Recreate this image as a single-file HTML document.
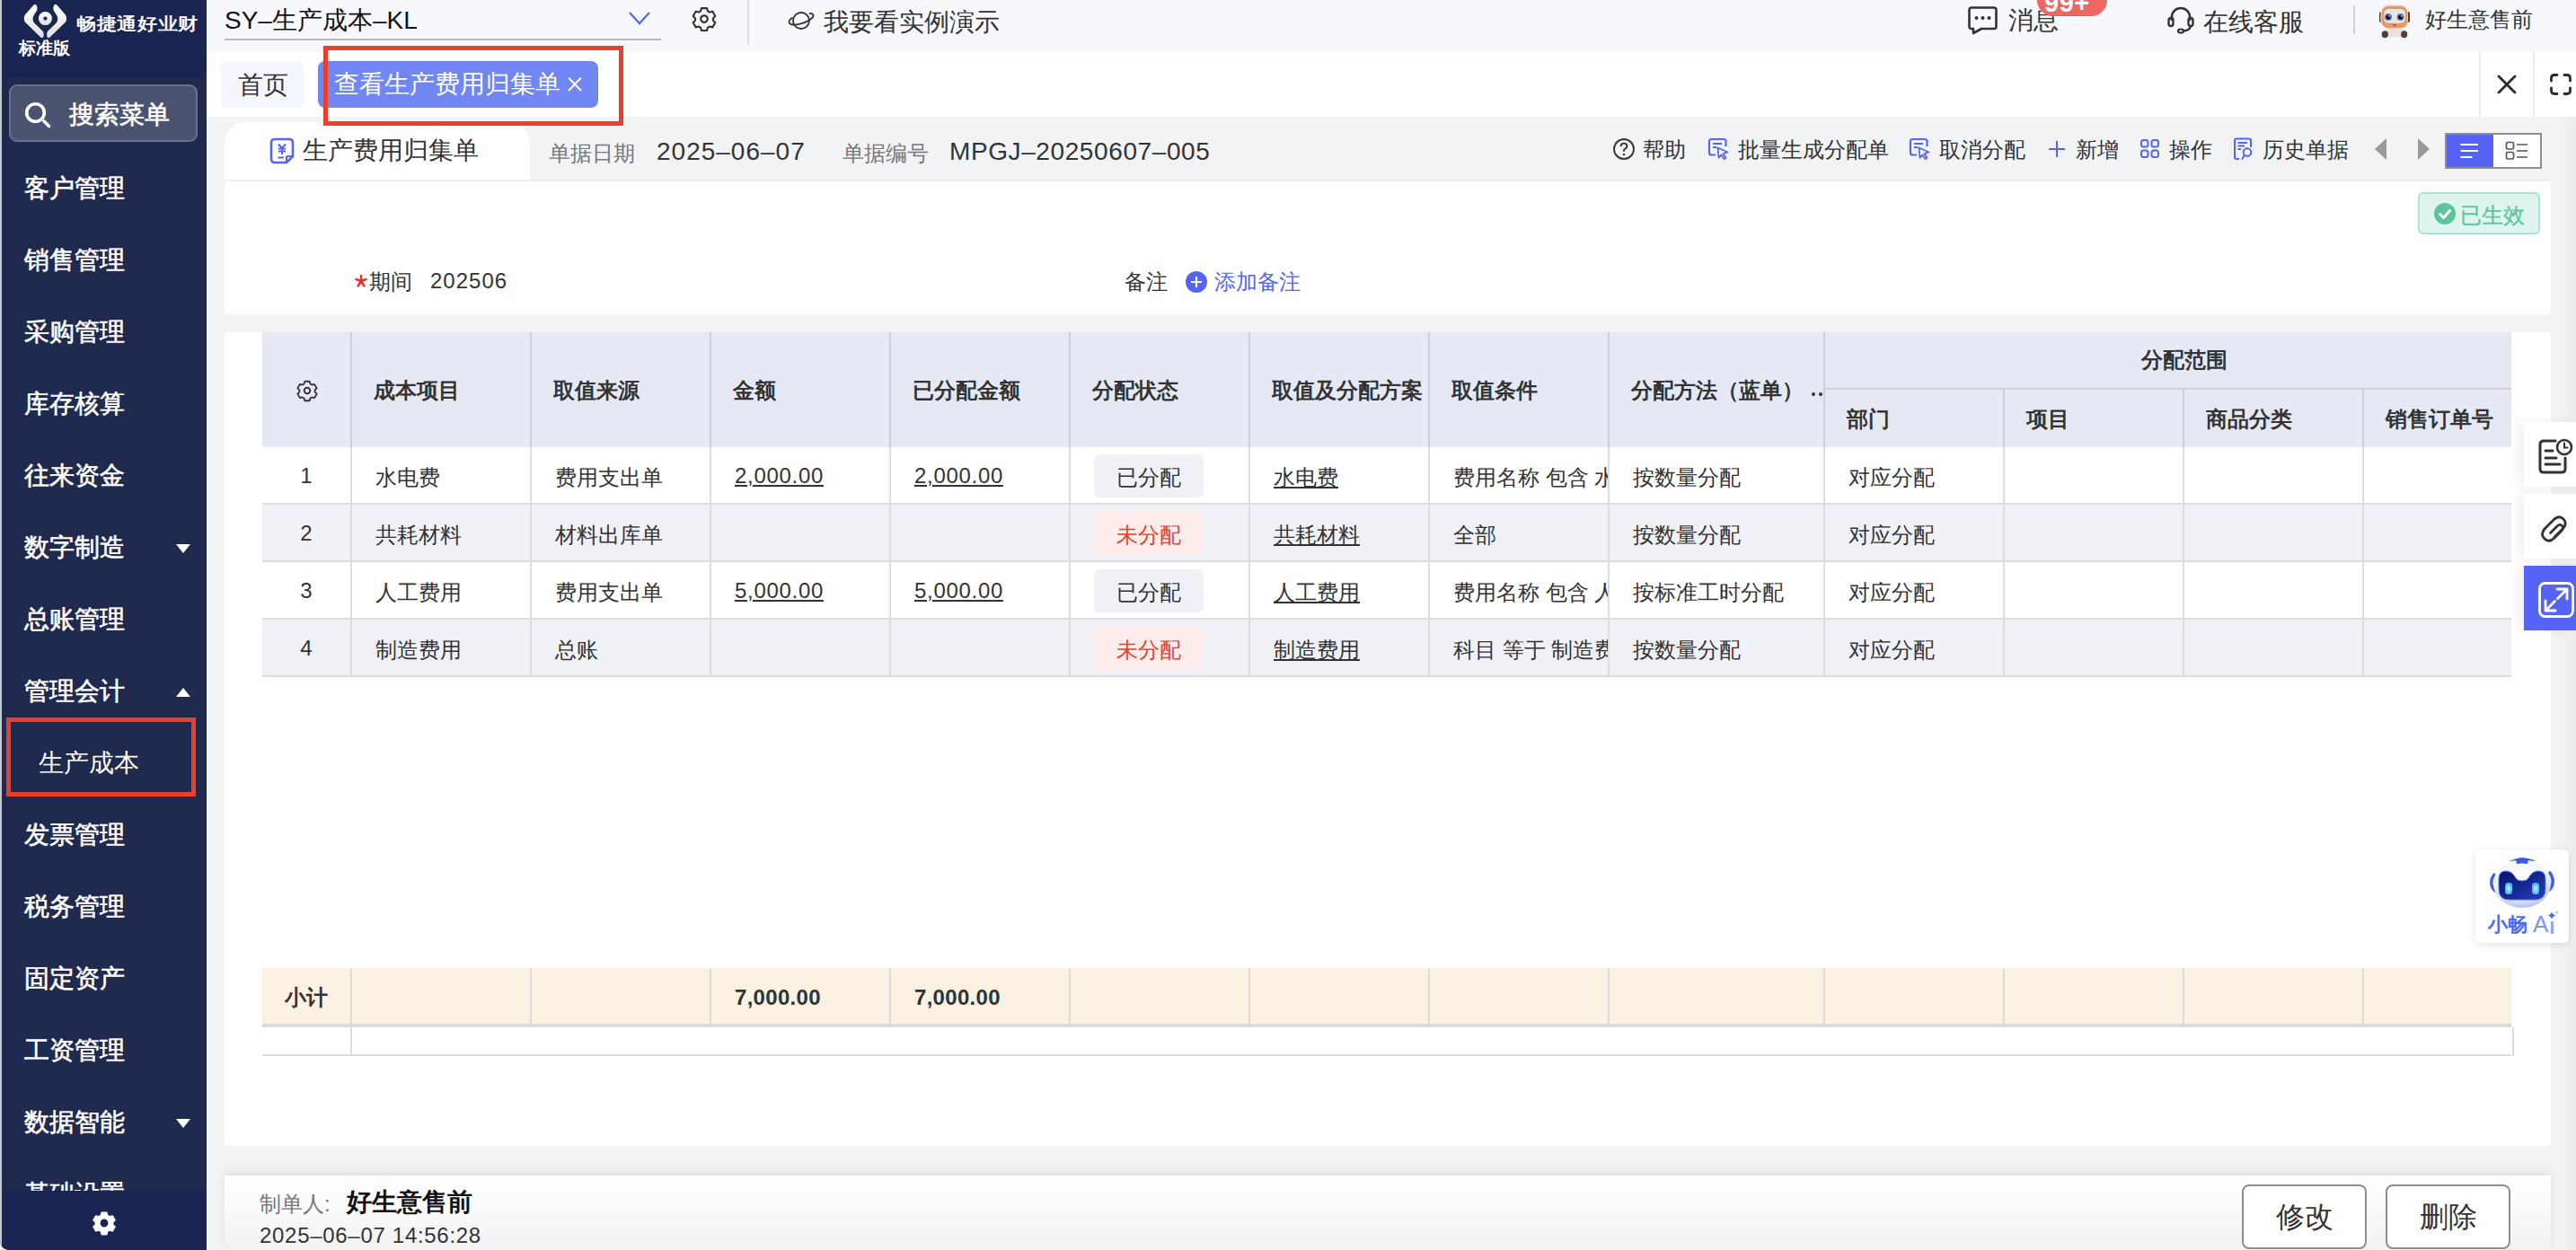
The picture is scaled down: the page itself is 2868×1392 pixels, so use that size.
<!DOCTYPE html>
<html><head><meta charset="utf-8">
<style>
*{box-sizing:border-box;margin:0;padding:0}
html,body{width:2868px;height:1392px;overflow:hidden}
body{position:relative;background:#f2f3f5;font-family:"Liberation Sans",sans-serif;color:#333}
.a{position:absolute;white-space:nowrap}
/* sidebar */
#sb{position:absolute;left:0;top:0;width:230px;height:1392px;background:#1f2a4e;overflow:hidden;border-bottom-left-radius:10px}
#sb .edge{position:absolute;left:0;top:0;width:2px;height:1392px;background:#c9c9cc}
#sb .logo{position:absolute;left:2px;top:0;width:228px;height:86px;background:#1a2552}
#sb .bot{position:absolute;left:2px;top:1326px;width:228px;height:66px;background:#1a2552}
#sb .mi{position:absolute;left:27px;font-size:28px;line-height:28px;color:#fff;-webkit-text-stroke:0.6px #fff;white-space:nowrap}
#sb .tri{position:absolute;left:196px;width:0;height:0;border-left:8px solid transparent;border-right:8px solid transparent}
/* top bar */
#top{position:absolute;left:230px;top:0;width:2638px;height:58px;background:#f7f8fc}
#tabs{position:absolute;left:230px;top:58px;width:2638px;height:72px;background:#fff}
.card{position:absolute;background:#fff}
.t28{font-size:28px;line-height:28px}
.t24{font-size:24px;line-height:24px}
.blue{color:#5664f5}
/* table */
#tbl{position:absolute;left:292px;top:370px}
.cell{position:absolute;border-right:2px solid #dcdcdc;border-bottom:2px solid #dcdcdc}
.hd{background:#e6e9f3}
.alt{background:#f0f1f7}
</style></head><body>

<!-- SIDEBAR -->
<div id="sb">
  <div class="logo"></div>
  <div class="mi" style="top:196px">客户管理</div>
  <div class="mi" style="top:276px">销售管理</div>
  <div class="mi" style="top:356px">采购管理</div>
  <div class="mi" style="top:436px">库存核算</div>
  <div class="mi" style="top:516px">往来资金</div>
  <div class="mi" style="top:596px">数字制造</div>
  <div class="mi" style="top:676px">总账管理</div>
  <div class="mi" style="top:756px">管理会计</div>
  <div class="mi" style="top:836px;left:43px;font-weight:400;-webkit-text-stroke:0">生产成本</div>
  <div class="mi" style="top:916px">发票管理</div>
  <div class="mi" style="top:996px">税务管理</div>
  <div class="mi" style="top:1076px">固定资产</div>
  <div class="mi" style="top:1156px">工资管理</div>
  <div class="mi" style="top:1236px">数据智能</div>
  <div class="mi" style="top:1316px">基础设置</div>
  <div class="tri" style="top:606px;border-top:10px solid #fff"></div>
  <div class="tri" style="top:766px;border-bottom:10px solid #fff"></div>
  <div class="tri" style="top:1246px;border-top:10px solid #fff"></div>
  <div class="a" style="left:7px;top:799px;width:211px;height:88px;border:5px solid #e8402a"></div>
  <div class="bot"></div>
  <svg class="a" style="left:0;top:0" width="230" height="86" viewBox="0 0 230 86">
    <defs><linearGradient id="lg1" x1="0" y1="0" x2="0" y2="1"><stop offset="0" stop-color="#ffffff"/><stop offset="1" stop-color="#dedede"/></linearGradient></defs>
    <path id="lcres" d="M37.5,5.5 L27.8,16.5 Q25.8,20.5 27.8,24.5 L45.2,41.5 Q47.8,43.6 48.6,40.2 L48.6,37.8 Q48.6,35.6 47.2,34.3 L37.8,25.2 Q35.3,21 37.8,16.8 L40.6,12.6 Q42.2,10 41.2,7.2 Q39.8,3.6 37.5,5.5 Z" fill="url(#lg1)"/>
    <use href="#lcres" transform="translate(100.8,0) scale(-1,1)"/>
    <circle cx="50.4" cy="20.6" r="7.5" fill="url(#lg1)"/>
    <circle cx="50.4" cy="20.6" r="2.1" fill="#1a2552"/>
  </svg>
  <div class="a" style="left:21px;top:44px;font-size:19px;line-height:19px;color:#fff;font-weight:700">标准版</div>
  <div class="a" style="left:85px;top:18px;font-size:22px;line-height:22px;color:#fff;-webkit-text-stroke:0.7px #fff;letter-spacing:0.7px;transform:scaleY(0.86);transform-origin:0 0">畅捷通好业财</div>
  <div class="a" style="left:10px;top:94px;width:210px;height:64px;border-radius:9px;background:#4a5470;border:2px solid #687190"></div>
  <svg class="a" style="left:24px;top:110px" width="36" height="36" viewBox="0 0 36 36">
    <circle cx="15.5" cy="15.5" r="9.8" fill="none" stroke="#fff" stroke-width="3.6"/>
    <line x1="25" y1="25" x2="30.5" y2="30.5" stroke="#fff" stroke-width="3.6" stroke-linecap="round"/>
  </svg>
  <div class="mi" style="left:77px;top:114px">搜索菜单</div>
  <svg class="a" style="left:102px;top:1348px" width="28" height="28" viewBox="0 0 24 24">
    <path fill="#fff" fill-rule="evenodd" d="M9.2 1.2h5.6l.9 3.1 1.5.9 3.1-.8 2.8 4.8-2.2 2.3v1.7l2.2 2.3-2.8 4.8-3.1-.8-1.5.9-.9 3.1H9.2l-.9-3.1-1.5-.9-3.1.8L.9 15.5l2.2-2.3v-1.7L.9 9.2l2.8-4.8 3.1.8 1.5-.9zM12 8.2a3.8 3.8 0 1 0 0 7.6 3.8 3.8 0 0 0 0-7.6z"/>
  </svg>
  <div class="edge"></div>
</div>

<!-- TOP BAR -->
<div id="top"></div>
<div id="tabs"></div>

<!-- top bar content -->
<div class="a t28" style="left:250px;top:9px;color:#111">SY–生产成本–KL</div>
<div class="a" style="left:250px;top:43px;width:486px;height:2px;background:#b9b9bd"></div>
<svg class="a" style="left:698px;top:10px" width="28" height="20" viewBox="0 0 28 20"><polyline points="3,4 14,16 25,4" fill="none" stroke="#5664f5" stroke-width="2.2"/></svg>
<svg class="a" style="left:768px;top:6px" width="32" height="30" viewBox="0 0 24 24"><path fill="none" stroke="#333" stroke-width="1.7" stroke-linejoin="round" d="M9.6 2.5h4.8l.8 2.6 1.6.95 2.65-.65 2.4 4.15-1.9 1.95v1.9l1.9 1.95-2.4 4.15-2.65-.65-1.6.95-.8 2.6H9.6l-.8-2.6-1.6-.95-2.65.65-2.4-4.15 1.9-1.95v-1.9l-1.9-1.95 2.4-4.15 2.65.65 1.6-.95z"/><circle cx="12" cy="12" r="3" fill="none" stroke="#333" stroke-width="1.8"/></svg>
<div class="a" style="left:832px;top:0;width:2px;height:50px;background:#dedfe3"></div>
<svg class="a" style="left:876px;top:10px" width="32" height="26" viewBox="0 0 32 26"><circle cx="16" cy="13" r="9" fill="none" stroke="#333" stroke-width="1.8"/><path d="M6.5,9.5 C1,13 1.5,17 7,17.5 C13,18 22,15 27,11 C31,8 30,4.5 25,5" fill="none" stroke="#333" stroke-width="1.8"/></svg>
<div class="a t28" style="left:917px;top:11px;color:#333">我要看实例演示</div>

<svg class="a" style="left:2190px;top:5px" width="36" height="34" viewBox="0 0 36 34"><path d="M5,3.5 H30 Q32.5,3.5 32.5,6 V24.5 Q32.5,27 30,27 H16 L7,32 V27 H5 Q2.5,27 2.5,24.5 V6 Q2.5,3.5 5,3.5 Z" fill="none" stroke="#333" stroke-width="2.6" stroke-linejoin="round"/><circle cx="10.5" cy="15" r="2" fill="#333"/><circle cx="17.5" cy="15" r="2" fill="#333"/><circle cx="24.5" cy="15" r="2" fill="#333"/></svg>
<div class="a t28" style="left:2236px;top:9px;color:#333">消息</div>
<div class="a" style="left:2268px;top:-18px;width:78px;height:36px;border-radius:18px;background:#ec6762"></div>
<div class="a" style="left:2276px;top:-11px;font-size:29px;line-height:29px;color:#fff;font-weight:700;letter-spacing:0.5px">99+</div>
<svg class="a" style="left:2412px;top:6px" width="32" height="32" viewBox="0 0 32 32"><path d="M6,17 V13 A10,10 0 0 1 26,13 V17" fill="none" stroke="#333" stroke-width="2.6"/><rect x="2.5" y="14" width="5" height="9" rx="2.5" fill="none" stroke="#333" stroke-width="2.4"/><rect x="24.5" y="14" width="5" height="9" rx="2.5" fill="none" stroke="#333" stroke-width="2.4"/><path d="M27,23 Q26,28 19,28.5" fill="none" stroke="#333" stroke-width="2.4"/><ellipse cx="16" cy="28.5" rx="3" ry="2" fill="none" stroke="#333" stroke-width="2.2"/></svg>
<div class="a t28" style="left:2453px;top:11px;color:#333">在线客服</div>
<div class="a" style="left:2620px;top:6px;width:2px;height:32px;background:#d3d3d6"></div>
<svg class="a" style="left:2646px;top:3px" width="40" height="40" viewBox="0 0 40 40">
  <rect x="3" y="10" width="3.5" height="12" rx="1.7" fill="#5a3b2c"/>
  <rect x="33.5" y="10" width="3.5" height="12" rx="1.7" fill="#5a3b2c"/>
  <rect x="4.5" y="1.5" width="30.5" height="27.5" rx="9" fill="#f3ede9"/>
  <rect x="5.5" y="3.5" width="29" height="25" rx="8" fill="#e49b6b"/>
  <rect x="8.3" y="7" width="23.5" height="15.8" rx="5" fill="#e9e3e2"/>
  <circle cx="13" cy="16.1" r="4" fill="#4f8ad6"/><circle cx="13" cy="16.1" r="2.7" fill="#1b1212"/><circle cx="14.2" cy="14.9" r="0.8" fill="#fff"/>
  <circle cx="26.6" cy="16.1" r="4" fill="#4f8ad6"/><circle cx="26.6" cy="16.1" r="2.7" fill="#1b1212"/><circle cx="27.8" cy="14.9" r="0.8" fill="#fff"/>
  <path d="M17.5,24.5 H22.5 L20,26.2 Z" fill="#6e4030"/>
  <rect x="11" y="28.5" width="18" height="10" rx="2" fill="#e7e2e0"/>
  <ellipse cx="9.3" cy="35.2" rx="3.6" ry="4" fill="#5a3b2c"/>
  <ellipse cx="30.7" cy="35.2" rx="3.6" ry="4" fill="#5a3b2c"/>
</svg>
<div class="a t24" style="left:2700px;top:10px;color:#333">好生意售前</div>

<!-- tabs row -->
<div class="a" style="left:246px;top:68px;width:92px;height:52px;border-radius:8px;background:#f4f6fd"></div>
<div class="a t28" style="left:265px;top:81px;color:#333">首页</div>
<div class="a" style="left:354px;top:68px;width:312px;height:52px;border-radius:8px;background:#7086f3"></div>
<div class="a t28" style="left:372px;top:80px;color:#fff">查看生产费用归集单</div>
<svg class="a" style="left:630px;top:85px" width="20" height="18" viewBox="0 0 20 18"><path d="M3,1.5 L17,16 M17,1.5 L3,16" stroke="#fff" stroke-width="2"/></svg>
<div class="a" style="left:360px;top:51px;width:334px;height:89px;border:5px solid #e8402a;z-index:100"></div>
<div class="a" style="left:2760px;top:58px;width:2px;height:72px;background:#ebebed"></div>
<div class="a" style="left:2820px;top:58px;width:2px;height:72px;background:#ebebed"></div>
<svg class="a" style="left:2779px;top:82px" width="24" height="24" viewBox="0 0 24 24"><path d="M3,3 L21,21 M21,3 L3,21" stroke="#2b2b2b" stroke-width="2.8" stroke-linecap="round"/></svg>
<svg class="a" style="left:2837px;top:80px" width="28" height="28" viewBox="0 0 28 28"><path d="M3.5,10 V7 Q3.5,3.5 7,3.5 H10 M18,3.5 H21 Q24.5,3.5 24.5,7 V10 M24.5,18 V21 Q24.5,24.5 21,24.5 H18 M10,24.5 H7 Q3.5,24.5 3.5,21 V18" fill="none" stroke="#2b2b2b" stroke-width="2.8" stroke-linecap="round"/></svg>

<!-- doc header title tab -->
<div class="card" style="left:250px;top:136px;width:340px;height:64px;border-radius:24px 24px 0 0"></div>
<div class="a" style="left:250px;top:200px;width:2590px;height:2px;background:#eceef2"></div>
<!-- form card -->
<div class="card" style="left:250px;top:202px;width:2590px;height:148px"></div>
<!-- doc header content -->
<svg class="a" style="left:299px;top:152px" width="30" height="32" viewBox="0 0 30 32">
  <path d="M7,3 H23 Q27,3 27,7 V22 L20,29 H7 Q3,29 3,25 V7 Q3,3 7,3 Z" fill="none" stroke="#5664f5" stroke-width="2.6" stroke-linejoin="round"/>
  <path d="M27,22 L21.5,22 Q20,22 20,23.5 V29" fill="none" stroke="#5664f5" stroke-width="2.2"/>
  <path d="M11,8.5 L15,13 L19,8.5 M15,13 V20 M11,13.5 H19 M11,16.5 H19 M10.5,23.5 H17" fill="none" stroke="#5664f5" stroke-width="2"/>
</svg>
<div class="a t28" style="left:337px;top:154px;color:#333">生产费用归集单</div>
<div class="a t24" style="left:611px;top:159px;color:#777">单据日期</div>
<div class="a t28" style="left:731px;top:155px;color:#333;letter-spacing:1px">2025–06–07</div>
<div class="a t24" style="left:938px;top:159px;color:#777">单据编号</div>
<div class="a t28" style="left:1057px;top:155px;color:#333;letter-spacing:0.6px">MPGJ–20250607–005</div>

<!-- toolbar -->
<svg class="a" style="left:1795px;top:153px" width="26" height="26" viewBox="0 0 26 26"><circle cx="13" cy="13" r="11" fill="none" stroke="#333" stroke-width="1.9"/><path d="M9.6,10 Q9.6,6.6 13,6.6 Q16.4,6.6 16.4,9.8 Q16.4,12 13.6,13.2 Q13,13.5 13,15 V15.8" fill="none" stroke="#333" stroke-width="1.9"/><circle cx="13" cy="19" r="1.2" fill="#333"/></svg>
<div class="a t24" style="left:1829px;top:155px;color:#333">帮助</div>
<svg class="a" style="left:1901px;top:153px" width="26" height="26" viewBox="0 0 26 26"><path d="M9,19.5 H4.5 Q2,19.5 2,17 V4.5 Q2,2 4.5,2 H18 Q20.5,2 20.5,4.5 V10" fill="none" stroke="#5664f5" stroke-width="2.2"/><path d="M6,7 H16 M6,11 H10" stroke="#5664f5" stroke-width="2"/><path d="M11.5,11.5 L22.5,16.5 L17.5,18 L20.5,23 L18.5,24 L15.5,19.5 L12.5,22.5 Z" fill="none" stroke="#5664f5" stroke-width="1.8" stroke-linejoin="round"/></svg>
<div class="a t24" style="left:1935px;top:155px;color:#333">批量生成分配单</div>
<svg class="a" style="left:2125px;top:153px" width="26" height="26" viewBox="0 0 26 26"><path d="M9,19.5 H4.5 Q2,19.5 2,17 V4.5 Q2,2 4.5,2 H18 Q20.5,2 20.5,4.5 V10" fill="none" stroke="#5664f5" stroke-width="2.2"/><path d="M6,7 H16 M6,11 H10" stroke="#5664f5" stroke-width="2"/><path d="M11.5,11.5 L22.5,16.5 L17.5,18 L20.5,23 L18.5,24 L15.5,19.5 L12.5,22.5 Z" fill="none" stroke="#5664f5" stroke-width="1.8" stroke-linejoin="round"/></svg>
<div class="a t24" style="left:2159px;top:155px;color:#333">取消分配</div>
<svg class="a" style="left:2280px;top:156px" width="20" height="20" viewBox="0 0 20 20"><path d="M10,1 V19 M1,10 H19" stroke="#5664f5" stroke-width="2"/></svg>
<div class="a t24" style="left:2311px;top:155px;color:#333">新增</div>
<svg class="a" style="left:2382px;top:154px" width="24" height="24" viewBox="0 0 24 24"><rect x="2" y="2" width="7.5" height="7.5" rx="2.5" fill="none" stroke="#5664f5" stroke-width="2"/><rect x="13.5" y="2" width="7.5" height="7.5" rx="2.5" fill="none" stroke="#5664f5" stroke-width="2"/><rect x="2" y="13.5" width="7.5" height="7.5" rx="2.5" fill="none" stroke="#5664f5" stroke-width="2"/><rect x="13.5" y="13.5" width="7.5" height="7.5" rx="2.5" fill="none" stroke="#5664f5" stroke-width="2"/></svg>
<div class="a t24" style="left:2415px;top:155px;color:#333">操作</div>
<svg class="a" style="left:2486px;top:153px" width="24" height="26" viewBox="0 0 24 26"><path d="M7,24 H4 Q2,24 2,22 V3.5 Q2,1.5 4,1.5 H18 Q20,1.5 20,3.5 V11" fill="none" stroke="#5664f5" stroke-width="2"/><path d="M5.5,6 H16 M5.5,9.5 H13 M5.5,13 H9" stroke="#5664f5" stroke-width="2"/><circle cx="16" cy="16.5" r="4.3" fill="none" stroke="#5664f5" stroke-width="2"/><path d="M13,19.5 L10,24.5" stroke="#5664f5" stroke-width="2"/></svg>
<div class="a t24" style="left:2519px;top:155px;color:#333">历史单据</div>
<svg class="a" style="left:2643px;top:153px" width="16" height="26" viewBox="0 0 16 26"><path d="M14,1 V25 L1,13 Z" fill="#999"/></svg>
<svg class="a" style="left:2691px;top:153px" width="16" height="26" viewBox="0 0 16 26"><path d="M1,1 V25 L14,13 Z" fill="#999"/></svg>
<div class="a" style="left:2722px;top:148px;width:108px;height:40px;border:2px solid #8e8e8e;background:#fff"></div>
<div class="a" style="left:2724px;top:150px;width:52px;height:36px;background:#5664f5"></div>
<svg class="a" style="left:2738px;top:158px" width="24" height="20" viewBox="0 0 24 20"><path d="M1.5,3 H21 M1.5,10 H21 M1.5,17 H14.5" stroke="#fff" stroke-width="1.8"/></svg>
<svg class="a" style="left:2788px;top:156px" width="28" height="24" viewBox="0 0 28 24"><rect x="2.5" y="2.5" width="8" height="7.5" rx="1.5" fill="none" stroke="#555" stroke-width="1.7"/><rect x="2.5" y="13.5" width="8" height="7.5" rx="1.5" fill="none" stroke="#555" stroke-width="1.7"/><path d="M14,5 H26 M14,12 H26 M14,19 H26" stroke="#555" stroke-width="1.7"/></svg>

<!-- status badge -->
<div class="a" style="left:2692px;top:214px;width:136px;height:47px;border-radius:6px;background:#def5ef;border:2px solid #a9e4cf"></div>
<svg class="a" style="left:2709px;top:225px" width="26" height="26" viewBox="0 0 26 26"><circle cx="13" cy="13" r="12" fill="#5cc59b"/><path d="M7.5,13.5 L11.5,17.5 L18.5,9.5" fill="none" stroke="#fff" stroke-width="3" stroke-linecap="round" stroke-linejoin="round"/></svg>
<div class="a t24" style="left:2739px;top:228px;color:#5cc59b;-webkit-text-stroke:0.3px #5cc59b">已生效</div>

<!-- form -->
<svg class="a" style="left:395px;top:306px" width="14" height="14" viewBox="0 0 14 14"><path d="M7,1 V7 M7,7 L1.5,5 M7,7 L12.5,5 M7,7 L3.5,12.5 M7,7 L10.5,12.5" stroke="#e8302a" stroke-width="2.4" stroke-linecap="round"/></svg>
<div class="a t24" style="left:411px;top:302px;color:#333">期间</div>
<div class="a t24" style="left:479px;top:301px;color:#333;letter-spacing:1px">202506</div>
<div class="a t24" style="left:1252px;top:302px;color:#333">备注</div>
<svg class="a" style="left:1320px;top:302px" width="24" height="24" viewBox="0 0 24 24"><circle cx="12" cy="12" r="12" fill="#5664f5"/><path d="M12,6 V18 M6,12 H18" stroke="#fff" stroke-width="2.2"/></svg>
<div class="a t24 blue" style="left:1352px;top:302px">添加备注</div>

<!-- table card -->
<div class="card" style="left:250px;top:370px;width:2590px;height:906px"></div>
<!-- TABLE -->
<div class="a" style="left:292px;top:370px;width:2504px;height:906px;overflow:hidden">
<div class="a" style="left:0px;top:0px;width:2504px;height:128px;background:#e6e9f3"></div>
<div class="a" style="left:0px;top:128px;width:2504px;height:62px;background:#ffffff"></div>
<div class="a" style="left:0px;top:190px;width:2504px;height:2px;background:#dcdcdc"></div>
<div class="a" style="left:0px;top:192px;width:2504px;height:62px;background:#f0f1f7"></div>
<div class="a" style="left:0px;top:254px;width:2504px;height:2px;background:#dcdcdc"></div>
<div class="a" style="left:0px;top:256px;width:2504px;height:62px;background:#ffffff"></div>
<div class="a" style="left:0px;top:318px;width:2504px;height:2px;background:#dcdcdc"></div>
<div class="a" style="left:0px;top:320px;width:2504px;height:62px;background:#f0f1f7"></div>
<div class="a" style="left:0px;top:382px;width:2504px;height:2px;background:#dcdcdc"></div>
<div class="a" style="left:98px;top:0px;width:2px;height:128px;background:#cfd0d4"></div>
<div class="a" style="left:98px;top:128px;width:2px;height:256px;background:#dcdcdc"></div>
<div class="a" style="left:298px;top:0px;width:2px;height:128px;background:#cfd0d4"></div>
<div class="a" style="left:298px;top:128px;width:2px;height:256px;background:#dcdcdc"></div>
<div class="a" style="left:498px;top:0px;width:2px;height:128px;background:#cfd0d4"></div>
<div class="a" style="left:498px;top:128px;width:2px;height:256px;background:#dcdcdc"></div>
<div class="a" style="left:698px;top:0px;width:2px;height:128px;background:#cfd0d4"></div>
<div class="a" style="left:698px;top:128px;width:2px;height:256px;background:#dcdcdc"></div>
<div class="a" style="left:898px;top:0px;width:2px;height:128px;background:#cfd0d4"></div>
<div class="a" style="left:898px;top:128px;width:2px;height:256px;background:#dcdcdc"></div>
<div class="a" style="left:1098px;top:0px;width:2px;height:128px;background:#cfd0d4"></div>
<div class="a" style="left:1098px;top:128px;width:2px;height:256px;background:#dcdcdc"></div>
<div class="a" style="left:1298px;top:0px;width:2px;height:128px;background:#cfd0d4"></div>
<div class="a" style="left:1298px;top:128px;width:2px;height:256px;background:#dcdcdc"></div>
<div class="a" style="left:1498px;top:0px;width:2px;height:128px;background:#cfd0d4"></div>
<div class="a" style="left:1498px;top:128px;width:2px;height:256px;background:#dcdcdc"></div>
<div class="a" style="left:1738px;top:0px;width:2px;height:128px;background:#cfd0d4"></div>
<div class="a" style="left:1738px;top:128px;width:2px;height:256px;background:#dcdcdc"></div>
<div class="a" style="left:1938px;top:62px;width:2px;height:66px;background:#cfd0d4"></div>
<div class="a" style="left:1938px;top:128px;width:2px;height:256px;background:#dcdcdc"></div>
<div class="a" style="left:2138px;top:62px;width:2px;height:66px;background:#cfd0d4"></div>
<div class="a" style="left:2138px;top:128px;width:2px;height:256px;background:#dcdcdc"></div>
<div class="a" style="left:2338px;top:62px;width:2px;height:66px;background:#cfd0d4"></div>
<div class="a" style="left:2338px;top:128px;width:2px;height:256px;background:#dcdcdc"></div>
<div class="a" style="left:1740px;top:62px;width:800px;height:2px;background:#cfd0d4"></div>
<div class="a" style="left:124px;top:53px;font-size:24px;line-height:24px;font-weight:700;color:#333">成本项目</div>
<div class="a" style="left:324px;top:53px;font-size:24px;line-height:24px;font-weight:700;color:#333">取值来源</div>
<div class="a" style="left:524px;top:53px;font-size:24px;line-height:24px;font-weight:700;color:#333">金额</div>
<div class="a" style="left:724px;top:53px;font-size:24px;line-height:24px;font-weight:700;color:#333">已分配金额</div>
<div class="a" style="left:924px;top:53px;font-size:24px;line-height:24px;font-weight:700;color:#333">分配状态</div>
<div class="a" style="left:1124px;top:53px;font-size:24px;line-height:24px;font-weight:700;color:#333">取值及分配方案</div>
<div class="a" style="left:1324px;top:53px;font-size:24px;line-height:24px;font-weight:700;color:#333">取值条件</div>
<div class="a" style="left:1524px;top:53px;font-size:24px;line-height:24px;font-weight:700;color:#333">分配方法（蓝单）</div>
<div class="a" style="left:1725px;top:67px;width:4px;height:4px;border-radius:2px;background:#333"></div>
<div class="a" style="left:1733px;top:67px;width:4px;height:4px;border-radius:2px;background:#333"></div>
<div class="a" style="left:1764px;top:85px;font-size:24px;line-height:24px;font-weight:700;color:#333">部门</div>
<div class="a" style="left:1964px;top:85px;font-size:24px;line-height:24px;font-weight:700;color:#333">项目</div>
<div class="a" style="left:2164px;top:85px;font-size:24px;line-height:24px;font-weight:700;color:#333">商品分类</div>
<div class="a" style="left:2364px;top:85px;font-size:24px;line-height:24px;font-weight:700;color:#333">销售订单号</div>
<div class="a" style="left:2092px;top:19px;font-size:24px;line-height:24px;font-weight:700;color:#333">分配范围</div>
<svg class="a" style="left:37px;top:52px;" width="26" height="26" viewBox="0 0 24 24"><path fill="none" stroke="#333" stroke-width="1.7" stroke-linejoin="round" d="M9.6 2.5h4.8l.8 2.6 1.6.95 2.65-.65 2.4 4.15-1.9 1.95v1.9l1.9 1.95-2.4 4.15-2.65-.65-1.6.95-.8 2.6H9.6l-.8-2.6-1.6-.95-2.65.65-2.4-4.15 1.9-1.95v-1.9l-1.9-1.95 2.4-4.15 2.65.65 1.6-.95z"/><circle cx="12" cy="12" r="3" fill="none" stroke="#333" stroke-width="1.8"/></svg>
<div class="a" style="left:0px;top:148px;width:98px;text-align:center;font-size:24px;line-height:24px;color:#333">1</div>
<div class="a" style="left:126px;top:150px;font-size:24px;line-height:24px;color:#333">水电费</div>
<div class="a" style="left:326px;top:150px;font-size:24px;line-height:24px;color:#333">费用支出单</div>
<div class="a" style="left:526px;top:148px;font-size:24px;line-height:24px;color:#333;text-decoration:underline;letter-spacing:0.7px">2,000.00</div>
<div class="a" style="left:726px;top:148px;font-size:24px;line-height:24px;color:#333;text-decoration:underline;letter-spacing:0.7px">2,000.00</div>
<div class="a" style="left:926px;top:136px;width:122px;height:48px;border-radius:7px;background:#f0f1f7"></div>
<div class="a" style="left:926px;top:150px;width:122px;text-align:center;font-size:24px;line-height:24px;color:#333">已分配</div>
<div class="a" style="left:1126px;top:150px;font-size:24px;line-height:24px;color:#333;text-decoration:underline">水电费</div>
<div class="a" style="left:1326px;top:150px;font-size:24px;line-height:24px;color:#333;width:172px;overflow:hidden">费用名称 包含 水电费</div>
<div class="a" style="left:1526px;top:150px;font-size:24px;line-height:24px;color:#333">按数量分配</div>
<div class="a" style="left:1766px;top:150px;font-size:24px;line-height:24px;color:#333">对应分配</div>
<div class="a" style="left:0px;top:212px;width:98px;text-align:center;font-size:24px;line-height:24px;color:#333">2</div>
<div class="a" style="left:126px;top:214px;font-size:24px;line-height:24px;color:#333">共耗材料</div>
<div class="a" style="left:326px;top:214px;font-size:24px;line-height:24px;color:#333">材料出库单</div>
<div class="a" style="left:926px;top:200px;width:122px;height:48px;border-radius:7px;background:#fcedec"></div>
<div class="a" style="left:926px;top:214px;width:122px;text-align:center;font-size:24px;line-height:24px;color:#333;color:#e8402a">未分配</div>
<div class="a" style="left:1126px;top:214px;font-size:24px;line-height:24px;color:#333;text-decoration:underline">共耗材料</div>
<div class="a" style="left:1326px;top:214px;font-size:24px;line-height:24px;color:#333;width:172px;overflow:hidden">全部</div>
<div class="a" style="left:1526px;top:214px;font-size:24px;line-height:24px;color:#333">按数量分配</div>
<div class="a" style="left:1766px;top:214px;font-size:24px;line-height:24px;color:#333">对应分配</div>
<div class="a" style="left:0px;top:276px;width:98px;text-align:center;font-size:24px;line-height:24px;color:#333">3</div>
<div class="a" style="left:126px;top:278px;font-size:24px;line-height:24px;color:#333">人工费用</div>
<div class="a" style="left:326px;top:278px;font-size:24px;line-height:24px;color:#333">费用支出单</div>
<div class="a" style="left:526px;top:276px;font-size:24px;line-height:24px;color:#333;text-decoration:underline;letter-spacing:0.7px">5,000.00</div>
<div class="a" style="left:726px;top:276px;font-size:24px;line-height:24px;color:#333;text-decoration:underline;letter-spacing:0.7px">5,000.00</div>
<div class="a" style="left:926px;top:264px;width:122px;height:48px;border-radius:7px;background:#f0f1f7"></div>
<div class="a" style="left:926px;top:278px;width:122px;text-align:center;font-size:24px;line-height:24px;color:#333">已分配</div>
<div class="a" style="left:1126px;top:278px;font-size:24px;line-height:24px;color:#333;text-decoration:underline">人工费用</div>
<div class="a" style="left:1326px;top:278px;font-size:24px;line-height:24px;color:#333;width:172px;overflow:hidden">费用名称 包含 人工费用</div>
<div class="a" style="left:1526px;top:278px;font-size:24px;line-height:24px;color:#333">按标准工时分配</div>
<div class="a" style="left:1766px;top:278px;font-size:24px;line-height:24px;color:#333">对应分配</div>
<div class="a" style="left:0px;top:340px;width:98px;text-align:center;font-size:24px;line-height:24px;color:#333">4</div>
<div class="a" style="left:126px;top:342px;font-size:24px;line-height:24px;color:#333">制造费用</div>
<div class="a" style="left:326px;top:342px;font-size:24px;line-height:24px;color:#333">总账</div>
<div class="a" style="left:926px;top:328px;width:122px;height:48px;border-radius:7px;background:#fcedec"></div>
<div class="a" style="left:926px;top:342px;width:122px;text-align:center;font-size:24px;line-height:24px;color:#333;color:#e8402a">未分配</div>
<div class="a" style="left:1126px;top:342px;font-size:24px;line-height:24px;color:#333;text-decoration:underline">制造费用</div>
<div class="a" style="left:1326px;top:342px;font-size:24px;line-height:24px;color:#333;width:172px;overflow:hidden">科目 等于 制造费用</div>
<div class="a" style="left:1526px;top:342px;font-size:24px;line-height:24px;color:#333">按数量分配</div>
<div class="a" style="left:1766px;top:342px;font-size:24px;line-height:24px;color:#333">对应分配</div>
<div class="a" style="left:0px;top:708px;width:2504px;height:62px;background:#faf1e1"></div>
<div class="a" style="left:0px;top:770px;width:2504px;height:4px;background:#dcdcdc"></div>
<div class="a" style="left:98px;top:708px;width:2px;height:62px;background:#dcdcdc"></div>
<div class="a" style="left:298px;top:708px;width:2px;height:62px;background:#dcdcdc"></div>
<div class="a" style="left:498px;top:708px;width:2px;height:62px;background:#dcdcdc"></div>
<div class="a" style="left:698px;top:708px;width:2px;height:62px;background:#dcdcdc"></div>
<div class="a" style="left:898px;top:708px;width:2px;height:62px;background:#dcdcdc"></div>
<div class="a" style="left:1098px;top:708px;width:2px;height:62px;background:#dcdcdc"></div>
<div class="a" style="left:1298px;top:708px;width:2px;height:62px;background:#dcdcdc"></div>
<div class="a" style="left:1498px;top:708px;width:2px;height:62px;background:#dcdcdc"></div>
<div class="a" style="left:1738px;top:708px;width:2px;height:62px;background:#dcdcdc"></div>
<div class="a" style="left:1938px;top:708px;width:2px;height:62px;background:#dcdcdc"></div>
<div class="a" style="left:2138px;top:708px;width:2px;height:62px;background:#dcdcdc"></div>
<div class="a" style="left:2338px;top:708px;width:2px;height:62px;background:#dcdcdc"></div>
<div class="a" style="left:0px;top:729px;width:98px;text-align:center;font-size:24px;line-height:24px;font-weight:700;color:#333">小计</div>
<div class="a" style="left:526px;top:729px;font-size:24px;line-height:24px;font-weight:700;color:#333;letter-spacing:0.3px">7,000.00</div>
<div class="a" style="left:726px;top:729px;font-size:24px;line-height:24px;font-weight:700;color:#333;letter-spacing:0.3px">7,000.00</div>
<div class="a" style="left:0px;top:804px;width:2507px;height:2px;background:#dcdcdc"></div>
<div class="a" style="left:98px;top:774px;width:2px;height:30px;background:#dcdcdc"></div>
</div>
<div class="a" style="left:2797px;top:1144px;width:2px;height:32px;background:#dcdcdc"></div>
<!-- footer -->
<div class="card" style="left:250px;top:1309px;width:2590px;height:83px;background:linear-gradient(#ffffff 0%,#fbfbfc 40%,#f1f1f3 100%);box-shadow:0 -4px 10px rgba(0,0,0,0.08)"></div>

<!-- footer content -->
<div class="a t24" style="left:289px;top:1329px;color:#777">制单人:</div>
<div class="a t28" style="left:386px;top:1325px;color:#111;font-weight:700">好生意售前</div>
<div class="a t24" style="left:289px;top:1364px;color:#333;letter-spacing:0.7px">2025–06–07 14:56:28</div>
<div class="a" style="left:2496px;top:1319px;width:139px;height:72px;border:2px solid #8e8e8e;border-radius:8px;background:#fff"></div>
<div class="a" style="left:2534px;top:1339px;font-size:32px;line-height:32px;color:#333">修改</div>
<div class="a" style="left:2656px;top:1319px;width:139px;height:72px;border:2px solid #8e8e8e;border-radius:8px;background:#fff"></div>
<div class="a" style="left:2694px;top:1339px;font-size:32px;line-height:32px;color:#333">删除</div>

<!-- right side panel -->
<div class="a" style="left:2846px;top:130px;width:22px;height:1262px;background:linear-gradient(90deg,rgba(0,0,0,0) 0%,rgba(0,0,0,0.025) 100%)"></div>
<div class="a" style="left:2810px;top:470px;width:58px;height:72px;background:#fff;box-shadow:-6px 0 12px rgba(0,0,0,0.06)"></div>
<div class="a" style="left:2810px;top:550px;width:58px;height:72px;background:#fff;box-shadow:-6px 0 12px rgba(0,0,0,0.06)"></div>
<div class="a" style="left:2810px;top:630px;width:58px;height:72px;background:#5664f5;box-shadow:-6px 0 12px rgba(0,0,0,0.06)"></div>
<svg class="a" style="left:2824px;top:486px" width="42" height="44" viewBox="0 0 42 44">
  <path d="M21,5 H8 Q4,5 4,9 V36 Q4,40 8,40 H28 Q32,40 32,36 V24" fill="none" stroke="#333" stroke-width="3" stroke-linecap="round"/>
  <path d="M10,16 H18 M10,24 H22 M10,31 H26" stroke="#333" stroke-width="3" stroke-linecap="round"/>
  <circle cx="31" cy="12" r="8" fill="#fff" stroke="#333" stroke-width="2.6"/>
  <path d="M31,7.5 V12.5 H34.5" fill="none" stroke="#333" stroke-width="2.2" stroke-linecap="round"/>
</svg>
<svg class="a" style="left:2826px;top:568px" width="40" height="40" viewBox="0 0 40 40">
  <path d="M18,30 L27,21 Q33,15 28,10 Q23,5 17,11 L7,21 Q2,27 7,32 Q12,37 18,31 L26,23 Q29,20 26.5,17.5 Q24,15 21,18 L13.5,25.5" fill="none" stroke="#333" stroke-width="2.8" stroke-linecap="round"/>
</svg>
<svg class="a" style="left:2825px;top:647px" width="42" height="42" viewBox="0 0 42 42">
  <rect x="2.5" y="2.5" width="37" height="37" rx="6" fill="none" stroke="#fff" stroke-width="2.8"/>
  <path d="M22,9 H33 V20 M33,9 L22.5,19.5 M20,33 H9 V22 M9,33 L19.5,22.5" fill="none" stroke="#fff" stroke-width="2.8" stroke-linecap="round" stroke-linejoin="round"/>
</svg>

<!-- AI bot -->
<div class="a" style="left:2756px;top:946px;width:104px;height:104px;border-radius:6px;background:#fff;box-shadow:0 2px 10px rgba(0,0,0,0.12)"></div>
<svg class="a" style="left:2770px;top:952px" width="76" height="62" viewBox="0 0 76 62">
  <defs>
    <radialGradient id="hg" cx="0.45" cy="0.3" r="0.75"><stop offset="0" stop-color="#ffffff"/><stop offset="0.65" stop-color="#eef1fb"/><stop offset="1" stop-color="#aab8e0"/></radialGradient>
    <linearGradient id="fg" x1="0" y1="0" x2="1" y2="1"><stop offset="0" stop-color="#0b1366"/><stop offset="0.6" stop-color="#1a2a9a"/><stop offset="1" stop-color="#2740c0"/></linearGradient>
    <radialGradient id="eg" cx="0.5" cy="0.5" r="0.5"><stop offset="0" stop-color="#c8f4ff"/><stop offset="1" stop-color="#3fb6f5"/></radialGradient>
  </defs>
  <path d="M7,22 Q3,27 4,33 Q5,38 8,40" fill="none" stroke="#3d5fe0" stroke-width="3.5" stroke-linecap="round"/>
  <path d="M69,20 Q73,26 72,32 Q71,37 68,39" fill="none" stroke="#3d5fe0" stroke-width="3.5" stroke-linecap="round"/>
  <ellipse cx="38" cy="32" rx="32" ry="27" fill="url(#hg)"/>
  <path d="M24,7 Q38,0 54,7 Q46,6 38,6 Q30,6 24,7 Z" fill="#2f50d8"/>
  <path d="M31,4.5 Q38,2 45,4.5 L44,10 Q38,9 32,10 Z" fill="#3b5ce6"/>
  <path d="M12,27 Q12,18 20,18 Q27,18 31,26 Q33,29 38,29 Q43,29 45,26 Q49,18 56,18 Q64,18 64,27 V38 Q64,50 52,50 H24 Q12,50 12,38 Z" fill="url(#fg)" stroke="#4e7af0" stroke-width="1"/>
  <rect x="19" y="31" width="8" height="13" rx="3.5" fill="url(#eg)"/>
  <rect x="49" y="31" width="8" height="13" rx="3.5" fill="url(#eg)"/>
</svg>
<div class="a" style="left:2770px;top:1019px;font-size:22px;line-height:22px;color:#4a6cf0;font-weight:700">小畅</div>
<div class="a" style="left:2820px;top:1016px;font-size:26px;line-height:26px;color:#7b95f5">A</div><div class="a" style="left:2840px;top:1026px;width:3px;height:14px;background:#8ea6f7"></div><svg class="a" style="left:2835px;top:1014px" width="14" height="12" viewBox="0 0 14 12"><path d="M6,1 Q6.6,4.4 10,5.5 Q6.6,6.6 6,10 Q5.4,6.6 2,5.5 Q5.4,4.4 6,1 Z" fill="#4a6cf0"/><circle cx="11.5" cy="2" r="1.2" fill="none" stroke="#8ea6f7" stroke-width="0.8"/></svg>
</body></html>
